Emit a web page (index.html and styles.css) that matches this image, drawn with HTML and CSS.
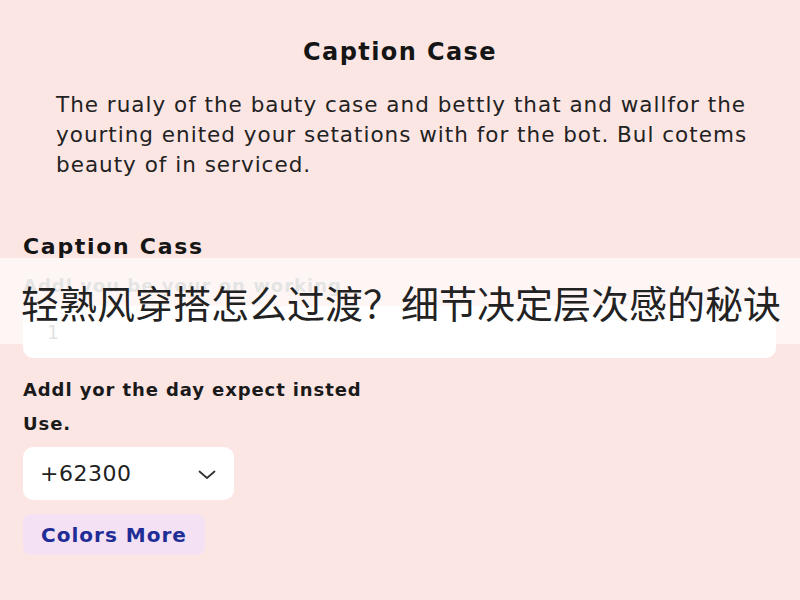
FILE: index.html
```html
<!DOCTYPE html>
<html lang="zh">
<head>
<meta charset="utf-8">
<link rel="stylesheet" href="styles.css">
</head>
<body>
<main class="page">
  <h1 class="title">Caption Case</h1>
  <p class="intro">The rualy of the bauty case and bettly that and wallfor the yourting enited your setations with for the bot. Bul cotems beauty of in serviced.</p>
  <h2 class="section">Caption Cass</h2>
  <div class="field">
    <div class="field-label">Addl you be your on working</div>
    <div class="input">1</div>
  </div>
  <div class="question">Addl yor the day expect insted</div>
  <div class="question use">Use.</div>
  <div class="select">
    <span>+62300</span>
    <svg class="chev" width="18" height="10" viewBox="0 0 18 10"><path d="M1.5 1.5 L9 8 L16.5 1.5" fill="none" stroke="#333" stroke-width="1.8" stroke-linecap="round" stroke-linejoin="round"/></svg>
  </div>
  <button class="more">Colors More</button>
</main>
<div class="banner">轻熟风穿搭怎么过渡？细节决定层次感的秘诀</div>
</body>
</html>
```
FILE: styles.css
```css
html, body {
  margin: 0;
  padding: 0;
  background: #fce6e4;
  width: 800px;
  height: 600px;
  overflow: hidden;
}
.page {
  padding: 0 23px;
  font-family: "DejaVu Sans", "Liberation Sans", sans-serif;
  color: #1c1c1c;
  display: flex;
  flex-direction: column;
  align-items: flex-start;
}
.title {
  align-self: center;
  margin: 36px 0 0;
  font-size: 24px;
  font-weight: 700;
  letter-spacing: 1.4px;
  line-height: 32px;
  color: #151515;
}
.intro {
  margin: 22px 0 0 33px;
  font-size: 21.5px;
  letter-spacing: 1px;
  line-height: 30px;
  color: #222;
  width: 714px;
}
.section {
  margin: 53px 0 0;
  font-size: 22px;
  font-weight: 700;
  letter-spacing: 1.7px;
  line-height: 28px;
  color: #151515;
}
.field {
  width: 753px;
  margin-top: 12px;
}
.field-label {
  font-size: 18px;
  font-weight: 700;
  letter-spacing: 1px;
  color: #b5b5b5;
  line-height: 26px;
}
.input {
  margin-top: 7px;
  height: 52px;
  background: #fff;
  border-radius: 10px;
  box-sizing: border-box;
  padding: 15px 0 0 24px;
  font-size: 19px;
  color: #b0b0b0;
}
.question {
  margin-top: 18px;
  font-size: 18px;
  font-weight: 700;
  letter-spacing: 0.9px;
  line-height: 28px;
  color: #1a1a1a;
}
.use {
  margin-top: 6px;
}
.select {
  margin-top: 9px;
  width: 211px;
  height: 53px;
  background: #fff;
  border-radius: 10px;
  box-sizing: border-box;
  padding: 0 18px 0 17px;
  display: flex;
  align-items: center;
  justify-content: space-between;
  font-size: 22px;
  letter-spacing: 0.5px;
  color: #222;
}
.chev {
  margin-top: 2px;
}
.more {
  margin-top: 14px;
  height: 41px;
  padding: 0 18px;
  border: none;
  border-radius: 8px;
  background: #f5e1f4;
  font-family: "DejaVu Sans", "Liberation Sans", sans-serif;
  font-size: 20px;
  font-weight: 700;
  letter-spacing: 1px;
  color: #1f2d96;
}
.banner {
  position: absolute;
  left: 0;
  top: 258px;
  width: 800px;
  height: 86px;
  background: rgba(255, 255, 255, 0.64);
  box-sizing: border-box;
  padding-left: 21px;
  display: flex;
  align-items: center;
  font-family: "Noto Sans CJK SC", sans-serif;
  font-size: 38px;
  color: #222;
  white-space: nowrap;
}
```
